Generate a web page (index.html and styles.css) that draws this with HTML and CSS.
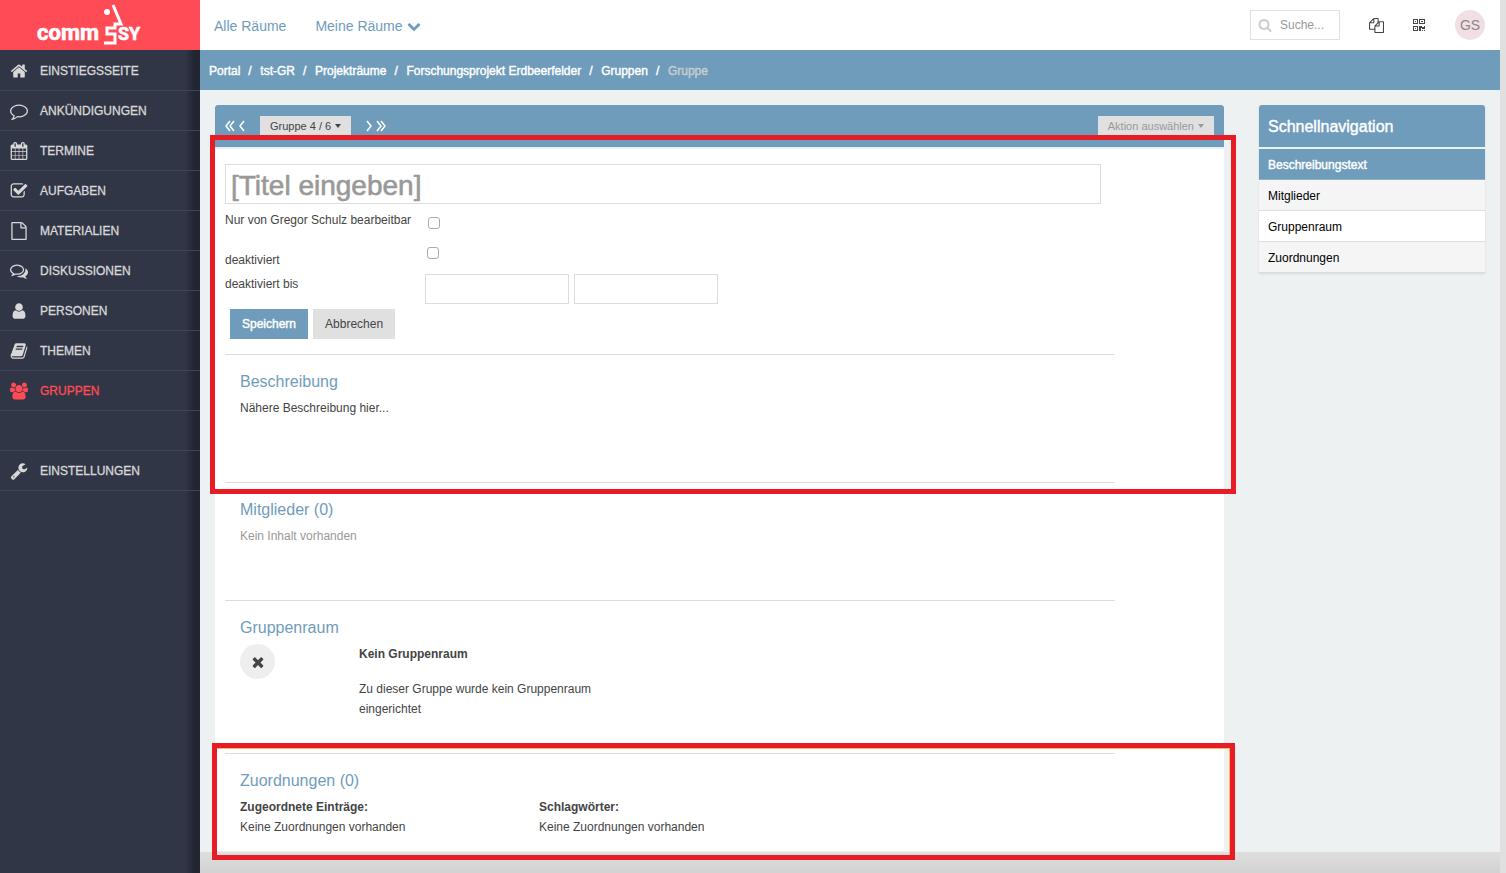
FILE: index.html
```html
<!DOCTYPE html>
<html lang="de">
<head>
<meta charset="utf-8">
<title>CommSy – Gruppe</title>
<link rel="stylesheet" href="styles.css">
</head>
<body>
<div class="page">
  <aside class="sidebar">
    <a class="logo" href="#" aria-label="CommSy">
      <svg width="200" height="50" viewBox="0 0 200 50">
        <text class="logo-text" x="37" y="40">comm</text>
        <text class="logo-text logo-caps" x="118" y="40">SY</text>
        <circle cx="107" cy="12" r="3"/>
        <path class="logo-line" d="M113 5l8 19h-6v4h-8v6h8v9h-11"/>
      </svg>
    </a>
    <nav>
      <ul class="menu">
        <li><a href="#"><svg class="icon" viewBox="0 0 1792 1792"><path d="M1472 992v480q0 26-19 45t-45 19h-384v-384h-256v384h-384q-26 0-45-19t-19-45v-480q0-1 .5-3t.5-3l575-474 575 474q1 2 1 6zm223-69l-62 74q-8 9-21 11h-3q-13 0-21-7l-692-577-692 577q-12 8-24 7-13-2-21-11l-62-74q-8-10-7-23.500t11-21.500l719-599q32-26 76-26t76 26l244 204v-195q0-14 9-23t23-9h192q14 0 23 9t9 23v408l219 182q10 8 11 21.500t-7 23.500z"/></svg>EINSTIEGSSEITE</a></li>
        <li><a href="#"><svg class="icon" viewBox="0 0 1792 1792"><path d="M896 384q-204 0-381.500 69.500t-282 187.500-104.500 255q0 112 71.500 213.500t201.500 175.500l87 50-27 96q-24 91-70 172 152-63 275-171l43-38 57 6q69 8 130 8 204 0 381.500-69.500t282-187.500 104.500-255-104.500-255-282-187.500-381.500-69.500zm896 512q0 174-120 321.500t-326 233-450 85.500q-70 0-145-8-198 175-460 242-49 14-114 22h-5q-15 0-27-10.500t-16-27.500v-1q-3-4-.5-12t2-10 4.500-9.500l6-9 7-8.500 8-9q7-8 31-34.500t34.500-38 31-39.500 32.500-51 27-59 26-76q-157-89-247.500-220t-90.500-281q0-174 120-321.500t326-233 450-85.500 450 85.500 326 233 120 321.500z"/></svg>ANKÜNDIGUNGEN</a></li>
        <li><a href="#"><svg class="icon" viewBox="0 0 1792 1792"><path d="M192 1664h288v-288h-288v288zm352 0h320v-288h-320v288zm-352-352h288v-320h-288v320zm352 0h320v-320h-320v320zm-352-384h288v-288h-288v288zm736 736h320v-288h-320v288zm-384-736h320v-288h-320v288zm768 736h288v-288h-288v288zm-384-352h320v-320h-320v320zm-352-864v-288q0-13-9.500-22.500t-22.500-9.500h-64q-13 0-22.500 9.500t-9.500 22.500v288q0 13 9.500 22.500t22.500 9.500h64q13 0 22.500-9.500t9.500-22.500zm736 864h288v-320h-288v320zm-384-384h320v-288h-320v288zm384 0h288v-288h-288v288zm32-480v-288q0-13-9.500-22.500t-22.500-9.500h-64q-13 0-22.500 9.500t-9.500 22.500v288q0 13 9.500 22.500t22.500 9.500h64q13 0 22.500-9.500t9.500-22.500zm384-64v1280q0 52-38 90t-90 38h-1408q-52 0-90-38t-38-90v-1280q0-52 38-90t90-38h128v-96q0-66 47-113t113-47h64q66 0 113 47t47 113v96h384v-96q0-66 47-113t113-47h64q66 0 113 47t47 113v96h128q52 0 90 38t38 90z"/></svg>TERMINE</a></li>
        <li><a href="#"><svg class="icon" viewBox="0 0 1792 1792"><path d="M1472 930v318q0 119-84.500 203.500t-203.500 84.500h-832q-119 0-203.500-84.500t-84.500-203.500v-832q0-119 84.500-203.500t203.500-84.500h832q63 0 117 25 15 7 18 23 3 17-9 29l-49 49q-10 10-23 10-3 0-9-2-23-6-45-6h-832q-66 0-113 47t-47 113v832q0 66 47 113t113 47h832q66 0 113-47t47-113v-254q0-13 9-22l64-64q10-10 23-10 6 0 12 3 20 8 20 29zm231-489l-814 814q-24 24-57 24t-57-24l-430-430q-24-24-24-57t24-57l110-110q24-24 57-24t57 24l263 263 647-647q24-24 57-24t57 24l110 110q24 24 24 57t-24 57z"/></svg>AUFGABEN</a></li>
        <li><a href="#"><svg class="icon" viewBox="0 0 1792 1792"><path d="M1596 380q28 28 48 76t20 88v1152q0 40-28 68t-68 28h-1344q-40 0-68-28t-28-68v-1600q0-40 28-68t68-28h896q40 0 88 20t76 48zm-444-244v376h376q-10-29-22-41l-313-313q-12-12-41-22zm384 1528v-1024h-416q-40 0-68-28t-28-68v-416h-768v1536h1280z"/></svg>MATERIALIEN</a></li>
        <li><a href="#"><svg class="icon" viewBox="0 0 1792 1792"><path d="M704 384q-153 0-286 52t-211.500 141-78.500 191q0 82 53 158t149 132l97 56-35 84q34-20 62-39l44-31 53 10q78 14 153 14 153 0 286-52t211.500-141 78.500-191-78.500-191-211.500-141-286-52zm0-128q191 0 353.500 68.500t256.500 186.500 94 257-94 257-256.500 186.500-353.500 68.500q-86 0-176-16-124 88-278 128-36 9-86 16h-3q-11 0-20.500-8t-11.500-21q-1-3-1-6.500t.5-6.500 2-6l2.500-5 3.500-5.500 4-5 4.500-5 4-4.500q5-6 23-25t26-29.500 22.500-29 25-38.500 20.500-44q-124-72-195-177t-71-224q0-139 94-257t256.500-186.500 353.500-68.500zm822 1169q10 24 20.500 44t25 38.500 22.500 29 26 29.500 23 25q1 1 4 4.500t4.500 5 4 5 3.500 5.500l2.500 5 2 6 .5 6.500-1 6.500q-3 14-13 22t-22 7q-50-7-86-16-154-40-278-128-90 16-176 16-271 0-472-132 58 4 88 4 161 0 309-45t264-129q125-92 192-212t67-254q0-77-23-152 129 71 204 178t75 230q0 120-71 224.500t-195 176.500z"/></svg>DISKUSSIONEN</a></li>
        <li><a href="#"><svg class="icon" viewBox="0 0 1792 1792"><path d="M1536 1399q0 109-62.500 187t-150.500 78h-854q-88 0-150.500-78t-62.500-187q0-85 8.500-160.500t31.500-152 58.500-131 94-89 134.500-34.500q131 128 313 128t313-128q76 0 134.500 34.500t94 89 58.500 131 31.500 152 8.500 160.500zm-256-887q0 159-112.500 271.500t-271.500 112.500-271.500-112.500-112.500-271.500 112.500-271.500 271.500-112.500 271.500 112.500 112.500 271.500z"/></svg>PERSONEN</a></li>
        <li><a href="#"><svg class="icon" viewBox="0 0 1792 1792"><path d="M1703 478q40 57 18 129l-275 906q-19 64-76.500 107.500t-122.500 43.500h-923q-77 0-148.500-53.500t-99.500-131.500q-24-67-2-127 0-4 3-27t4-37q1-8-3-21.500t-3-19.500q2-11 8-21t16.500-23.500 16.500-23.500q23-38 45-91.500t30-91.500q3-10 .5-30t-.5-28q3-11 17-28t17-23q21-36 42-92t25-90q1-9-2.500-32t.5-28q4-13 22-30.500t22-22.500q19-26 42.500-84.500t27.500-96.500q1-8-3-25.500t-2-26.500q2-8 9-18t18-23 17-21q8-12 16.500-30.500t15-35 16-36 19.500-32 26.500-23.500 36-11.500 47.500 5.500l-1 3q38-9 51-9h761q74 0 114 56t18 130l-274 906q-36 119-71.500 153.500t-128.500 34.500h-869q-27 0-38 15-11 16-1 43 24 70 144 70h923q29 0 56-15.500t35-41.500l300-987q7-22 5-57 38 15 59 43zm-1064 2q-4 13 2 22.500t20 9.500h608q13 0 25.500-9.500t16.500-22.500l21-64q4-13-2-22.500t-20-9.500h-608q-13 0-25.500 9.500t-16.500 22.500zm-83 256q-4 13 2 22.500t20 9.500h608q13 0 25.500-9.500t16.500-22.500l21-64q4-13-2-22.500t-20-9.500h-608q-13 0-25.500 9.500t-16.500 22.500z"/></svg>THEMEN</a></li>
        <li><a class="active" href="#"><svg class="icon" viewBox="0 0 1920 1792"><path d="M593 896q-162 5-265 128h-134q-82 0-138-40.500t-56-118.500q0-353 124-353 6 0 43.500 21t97.500 42.500 119 21.500q67 0 133-23-5 37-5 66 0 139 81 256zm1071 637q0 120-73 189.500t-194 69.500h-874q-121 0-194-69.500t-73-189.500q0-53 3.500-103.500t14-109 26.500-108.500 43-97.500 62-81 85.500-53.500 111.500-20q10 0 43 21.500t73 48 107 48 135 21.500 135-21.500 107-48 73-48 43-21.500q61 0 111.500 20t85.500 53.500 62 81 43 97.500 26.500 108.500 14 109 3.500 103.500zm-1024-1277q0 106-75 181t-181 75-181-75-75-181 75-181 181-75 181 75 75 181zm704 384q0 159-112.500 271.500t-271.500 112.500-271.500-112.500-112.500-271.500 112.500-271.500 271.500-112.500 271.500 112.500 112.500 271.500zm576 225q0 78-56 118.500t-138 40.500h-134q-103-123-265-128 81-117 81-256 0-29-5-66 66 23 133 23 59 0 119-21.500t97.500-42.500 43.500-21q124 0 124 353zm-128-609q0 106-75 181t-181 75-181-75-75-181 75-181 181-75 181 75 75 181z"/></svg>GRUPPEN</a></li>
        <li class="spacer"></li>
        <li><a href="#"><svg class="icon" viewBox="0 0 1792 1792"><path d="M448 1472q0-26-19-45t-45-19-45 19-19 45 19 45 45 19 45-19 19-45zm644-420l-682 682q-37 37-90 37-52 0-91-37l-106-108q-38-36-38-90 0-53 38-91l681-681q39 98 114.500 173.500t173.500 114.500zm634-435q0 39-23 106-47 134-164.500 217.500t-258.500 83.500q-185 0-316.500-131.500t-131.500-316.500 131.500-316.500 316.500-131.500q58 0 121.500 16.500t107.500 46.500q16 11 16 28t-16 28l-293 169v224l193 107q5-3 79-48.500t135.500-81 70.500-35.500q15 0 23.500 10t8.500 25z"/></svg>EINSTELLUNGEN</a></li>
      </ul>
    </nav>
  </aside>

  <div class="main">
    <header class="topbar">
      <nav class="rooms">
        <a href="#">Alle Räume</a>
        <a href="#">Meine Räume <svg width="14" height="14" viewBox="0 0 1792 1792"><path d="M1683 808l-742 741q-19 19-45 19t-45-19l-742-741q-19-19-19-45.500t19-45.500l166-165q19-19 45-19t45 19l531 531 531-531q19-19 45-19t45 19l166 165q19 19 19 45.500t-19 45.500z"/></svg></a>
      </nav>
      <div class="tools">
        <label class="search">
          <svg width="14" height="14" viewBox="0 0 1792 1792"><path d="M1216 832q0-185-131.500-316.500t-316.500-131.500-316.500 131.500-131.500 316.500 131.500 316.500 316.500 131.500 316.500-131.500 131.500-316.500zm512 832q0 52-38 90t-90 38q-54 0-90-38l-343-342q-179 124-399 124-143 0-273.500-55.500t-225-150-150-225-55.500-273.500 55.500-273.500 150-225 225-150 273.500-55.500 273.500 55.500 225 150 150 225 55.500 273.500q0 220-124 399l343 343q37 37 37 90z"/></svg>
          <input type="search" placeholder="Suche..." aria-label="Suche">
        </label>
        <a href="#" aria-label="Zwischenablage"><svg width="15" height="15" viewBox="0 0 1792 1792"><path d="M1696 384q40 0 68 28t28 68v1216q0 40-28 68t-68 28h-960q-40 0-68-28t-28-68v-288h-544q-40 0-68-28t-28-68v-672q0-40 20-88t48-76l408-408q28-28 76-48t88-20h416q40 0 68 28t28 68v328q68-40 128-40h416zm-544 213l-299 299h299v-299zm-640-384l-299 299h299v-299zm196 647l316-316v-416h-384v416q0 40-28 68t-68 28h-416v640h512v-256q0-40 20-88t48-76zm956 804v-1152h-384v416q0 40-28 68t-68 28h-416v640h896z"/></svg></a>
        <a href="#" aria-label="QR-Code"><svg width="12" height="12" viewBox="0 0 12 12"><path fill-rule="evenodd" d="M0 0h5v5H0zM1 1v3h3V1zM2 2h1v1H2zM6 0h6v5H6zM7 1v3h4V1zM8 2h2v1H8zM0 7h5v5H0zM1 8v3h3V8zM2 9h1v1H2zM6 7h3v1h2V7h1v3H9V9H8v3H6zM9 11h1v1H9zM11 11h1v1h-1z"/></svg></a>
        <a class="avatar" href="#">GS</a>
      </div>
    </header>

    <nav class="breadcrumb" aria-label="Pfad">
      <a href="#">Portal</a><span>/</span><a href="#">tst-GR</a><span>/</span><a href="#">Projekträume</a><span>/</span><a href="#">Forschungsprojekt Erdbeerfelder</a><span>/</span><a href="#">Gruppen</a><span>/</span><span class="current">Gruppe</span>
    </nav>

    <div class="content">
      <main class="card">
        <div class="card-head">
          <div class="pager">
            <a href="#" aria-label="Erste"><svg width="10" height="12" viewBox="0 0 10 12"><path d="M5 1L1 6l4 5M9 1L5 6l4 5"/></svg></a>
            <a href="#" aria-label="Vorherige"><svg width="6" height="12" viewBox="0 0 6 12"><path d="M5 1L1 6l4 5"/></svg></a>
            <button class="drop" type="button">Gruppe 4 / 6 <i class="caret"></i></button>
            <a href="#" aria-label="Nächste"><svg width="6" height="12" viewBox="0 0 6 12"><path d="M1 1l4 5-4 5"/></svg></a>
            <a href="#" aria-label="Letzte"><svg width="10" height="12" viewBox="0 0 10 12"><path d="M1 1l4 5-4 5M5 1l4 5-4 5"/></svg></a>
          </div>
          <button class="drop muted" type="button" disabled>Aktion auswählen <i class="caret"></i></button>
        </div>

        <form class="edit">
          <input class="title" type="text" placeholder="[Titel eingeben]" aria-label="Titel">
          <div class="row row-private">
            <label for="private">Nur von Gregor Schulz bearbeitbar</label>
            <input id="private" type="checkbox">
          </div>
          <div class="row row-off">
            <label for="off">deaktiviert</label>
            <input id="off" type="checkbox">
          </div>
          <div class="row">
            <label for="until">deaktiviert bis</label>
            <div class="dates">
              <input id="until" type="text">
              <input type="text" aria-label="Uhrzeit">
            </div>
          </div>
          <div class="buttons">
            <button class="btn primary" type="button">Speichern</button>
            <button class="btn" type="button">Abbrechen</button>
          </div>
        </form>

        <section class="section description">
          <h2>Beschreibung</h2>
          <p>Nähere Beschreibung hier...</p>
        </section>
        <section class="section members">
          <h2>Mitglieder (0)</h2>
          <p class="empty">Kein Inhalt vorhanden</p>
        </section>
        <section class="section grouproom">
          <h2>Gruppenraum</h2>
          <div class="room">
            <span class="round"><svg width="16" height="16" viewBox="0 0 1792 1792"><path d="M1490 1322q0 40-28 68l-136 136q-28 28-68 28t-68-28l-294-294-294 294q-28 28-68 28t-68-28l-136-136q-28-28-28-68t28-68l294-294-294-294q-28-28-28-68t28-68l136-136q28-28 68-28t68 28l294 294 294-294q28-28 68-28t68 28l136 136q28 28 28 68t-28 68l-294 294 294 294q28 28 28 68z"/></svg></span>
            <div class="room-text">
              <strong>Kein Gruppenraum</strong>
              <p>Zu dieser Gruppe wurde kein Gruppenraum eingerichtet</p>
            </div>
          </div>
        </section>
        <section class="section relations">
          <h2>Zuordnungen (0)</h2>
          <div class="columns">
            <div><strong>Zugeordnete Einträge:</strong><p>Keine Zuordnungen vorhanden</p></div>
            <div><strong>Schlagwörter:</strong><p>Keine Zuordnungen vorhanden</p></div>
          </div>
        </section>

        <div class="mark mark-edit"></div>
        <div class="mark mark-relations"></div>
      </main>

      <aside class="quicknav">
        <h2>Schnellnavigation</h2>
        <ul>
          <li><a class="active" href="#">Beschreibungstext</a></li>
          <li><a href="#">Mitglieder</a></li>
          <li><a href="#">Gruppenraum</a></li>
          <li><a href="#">Zuordnungen</a></li>
        </ul>
      </aside>
    </div>
  </div>
</div>
</body>
</html>
```
FILE: styles.css
```css
* { box-sizing: border-box; }

body {
  margin: 0;
  font: 12px/20px "Liberation Sans", Arial, sans-serif;
  color: #444;
  background: #e0e0e0;
}

a { color: inherit; text-decoration: none; }
h2, p, ul { margin: 0; padding: 0; font-weight: normal; }
ul { list-style: none; }
svg { display: block; fill: currentColor; }
input, button { font: inherit; color: inherit; }

.page {
  display: grid;
  grid-template-columns: 200px 1fr;
  min-height: 100vh;
  padding-right: 6px;
}

/* Sidebar */
.sidebar {
  background: linear-gradient(to right, transparent 185px, #222532 194px), #313646;
}

.logo {
  display: block;
  height: 50px;
  background: #ff4b55;
  color: #fff;
}

.logo-text {
  font: bold 22px Roboto, sans-serif;
  stroke: #fff;
  stroke-width: 0.6px;
}
.logo-caps { font-size: 18px; }
.logo-line { fill: none; stroke: #fff; stroke-width: 3px; }

.menu { padding-top: 1px; }
.menu li { height: 40px; border-bottom: 1px solid #3f4556; }
.menu a {
  display: flex;
  align-items: center;
  gap: 12px;
  height: 40px;
  padding-left: 10px;
  color: #d8d8d8;
  -webkit-text-stroke: 0.3px currentColor;
}
.menu .active { color: #ff4b55; }
.icon { width: 18px; height: 18px; }

/* Header */
.topbar {
  display: flex;
  align-items: center;
  justify-content: space-between;
  height: 50px;
  padding: 0 15px 0 14px;
  background: #fff;
}

.rooms { display: flex; gap: 29px; padding-top: 2px; font-size: 14px; color: #709cbb; }
.rooms a { display: flex; align-items: center; gap: 4px; }

.tools { display: flex; align-items: center; gap: 29px; }
.search {
  display: flex;
  align-items: center;
  gap: 8px;
  width: 90px;
  height: 30px;
  padding-left: 7px;
  border: 1px solid #e0e0e0;
  color: #ccc;
}
.search input {
  flex: 1;
  min-width: 0;
  padding: 0;
  border: 0;
  background: none;
}
.search input::placeholder { color: #999; }
.avatar {
  width: 30px;
  height: 30px;
  margin-left: 1px;
  border-radius: 50%;
  background: #f1dfe4;
  color: #888;
  font-size: 14px;
  line-height: 30px;
  text-align: center;
}

.breadcrumb {
  display: flex;
  align-items: center;
  gap: 8px;
  height: 40px;
  padding: 2px 9px 0;
  background: #709cbb;
  color: #fff;
  -webkit-text-stroke: 0.4px currentColor;
}
.breadcrumb span { min-width: 4px; }
.breadcrumb .current { color: #c8cdd2; }

/* Content */
.main {
  background: linear-gradient(to top, #d2d2d2, #dedede 21px);
}
.content {
  display: flex;
  align-items: flex-start;
  gap: 35px;
  padding: 15px 15px 1px;
  background: #edf1f2;
}

.card {
  position: relative;
  flex: 1;
  background: #fff;
}
.card-head {
  display: flex;
  align-items: flex-start;
  justify-content: space-between;
  height: 44px;
  padding: 11px 10px 0;
  border-bottom: 2px solid #e8f1f6;
  border-radius: 3px 3px 0 0;
  background: #709cbb;
}
.pager { display: flex; align-items: center; gap: 4px; color: #fff; }
.pager svg { fill: none; stroke: currentColor; stroke-width: 1.5; }
.drop {
  display: flex;
  align-items: center;
  gap: 4px;
  height: 20px;
  padding: 0 10px;
  border: 0;
  background: #e0e0e0;
  color: #444;
  font-size: 11px;
}
.pager .drop { margin: 0 11px; }
.muted { color: #999; }
.caret {
  border: 3px solid transparent;
  border-top: 4px solid currentColor;
  border-bottom: 0;
}

.edit { padding: 15px 10px; }
.edit input[type="text"] {
  border: 1px solid #ddd;
  background: #fff;
}
.edit .title {
  display: block;
  width: calc(100% - 113px);
  height: 40px;
  padding: 3px 5px 0;
  font-size: 28px;
}
.title::placeholder { color: #999; -webkit-text-stroke: 0.6px #999; }

.row { display: grid; grid-template-columns: 200px 1fr; align-items: start; }
.row input[type="checkbox"] {
  appearance: none;
  width: 12px;
  height: 12px;
  margin: 1px 2px;
  border: 1px solid #aaa;
  border-radius: 3px;
  background: #fff;
}
.row-private { height: 42px; padding-top: 6px; }
.row-private input[type="checkbox"] { margin: 7px 3px; }
.row-off { height: 28px; }
.row-off label { padding-top: 4px; }
.dates { display: flex; gap: 5px; }
.dates input { width: 144px; height: 30px; }

.buttons { display: flex; gap: 5px; padding: 5px 5px 0; }
.btn {
  height: 30px;
  padding: 0 12px;
  border: 0;
  background: #e0e0e0;
}
.primary { background: #709cbb; color: #fff; -webkit-text-stroke: 0.4px #fff; }

.section {
  margin: 0 109px 0 10px;
  padding: 15px 15px 14px;
  border-top: 1px solid #ddd;
}
.section h2 {
  margin-bottom: 4px;
  font-size: 16px;
  line-height: 24px;
  color: #709cbb;
}
.description { padding-bottom: 64px; }
.members { padding-bottom: 54px; }
.grouproom { padding-bottom: 34px; }
.empty { color: #999; }

.room { display: flex; gap: 84px; }
.round {
  display: grid;
  place-items: center;
  width: 35px;
  height: 35px;
  border-radius: 50%;
  background: #eee;
}
.room-text { width: 260px; }
.room-text p { margin-top: 15px; }
.columns { display: grid; grid-template-columns: 299px 1fr; }

/* Highlight frames */
.mark {
  position: absolute;
  border: 5px solid #e81c24;
  pointer-events: none;
}
.mark-edit { top: 30px; left: -5px; right: -12px; height: 359px; }
.mark-relations {
  bottom: -9px;
  left: -3px;
  right: -11px;
  height: 117px;
  box-shadow: inset -1px 1px #fbb36b;
}

/* Quick navigation */
.quicknav { width: 226px; box-shadow: 0 1px 2px #d5dadd; color: #000; }
.quicknav h2 {
  height: 44px;
  padding: 1px 9px 0;
  border-bottom: 2px solid #e8f1f6;
  border-radius: 3px 3px 0 0;
  background: #709cbb;
  color: #fff;
  font-size: 16px;
  line-height: 42px;
  -webkit-text-stroke: 0.4px #fff;
}
.quicknav a {
  display: block;
  padding: 6px 9px 4px;
  border-bottom: 1px solid #ddd;
  background: #fff;
}
.quicknav li:nth-child(even) a { background: #f5f5f5; }
.quicknav .active { background: #709cbb; color: #fff; -webkit-text-stroke: 0.4px #fff; }
.quicknav li .active { border-bottom-color: #8fb2ca; }
```
